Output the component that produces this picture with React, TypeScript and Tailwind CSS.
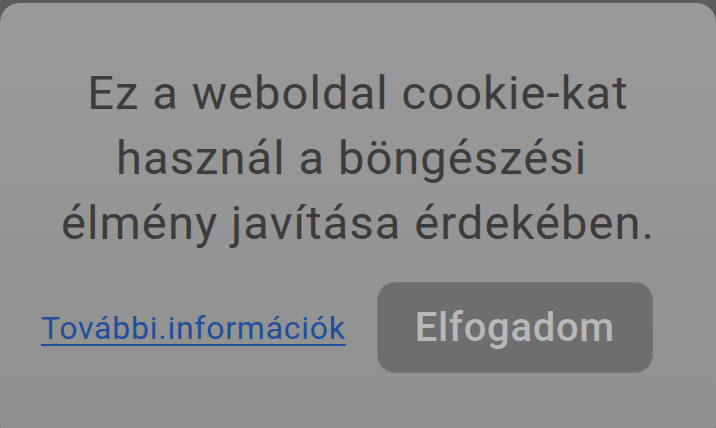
import React from 'react';

const App = () => {
  return (
    <div className="h-[428px] w-[716px] overflow-hidden bg-[#5c5c5c] pt-[3px] font-['Roboto',sans-serif]">
      <div className="h-[440px] rounded-[20px] bg-gradient-to-b from-[#9a9a9a] to-[#909090] shadow-[inset_0_1px_0_rgba(255,255,255,0.08)]">
        {/* Message */}
        <p className="pt-[57px] text-center text-[47px] leading-[65px] tracking-[1.1px] text-[#3c3c3c]">
          Ez a weboldal cookie-kat
          <br />
          használ a böngészési&nbsp;
          <br />
          élmény javítása érdekében.
        </p>

        {/* Actions */}
        <div className="mt-[27px] flex items-center pl-[41px]">
          <a href="#" className="text-[32px] leading-none tracking-[0.75px] text-[#1d4f9c] underline decoration-2 underline-offset-[5px]">
            További.információk
          </a>
          <button className="ml-[31px] h-[91px] w-[276px] rounded-[18px] border border-[#7a7a7a] bg-[#6e6e6e] text-[40px] font-medium tracking-[0.7px] text-[#b8b8b8]">
            Elfogadom
          </button>
        </div>
      </div>
    </div>
  );
};

export default App;
